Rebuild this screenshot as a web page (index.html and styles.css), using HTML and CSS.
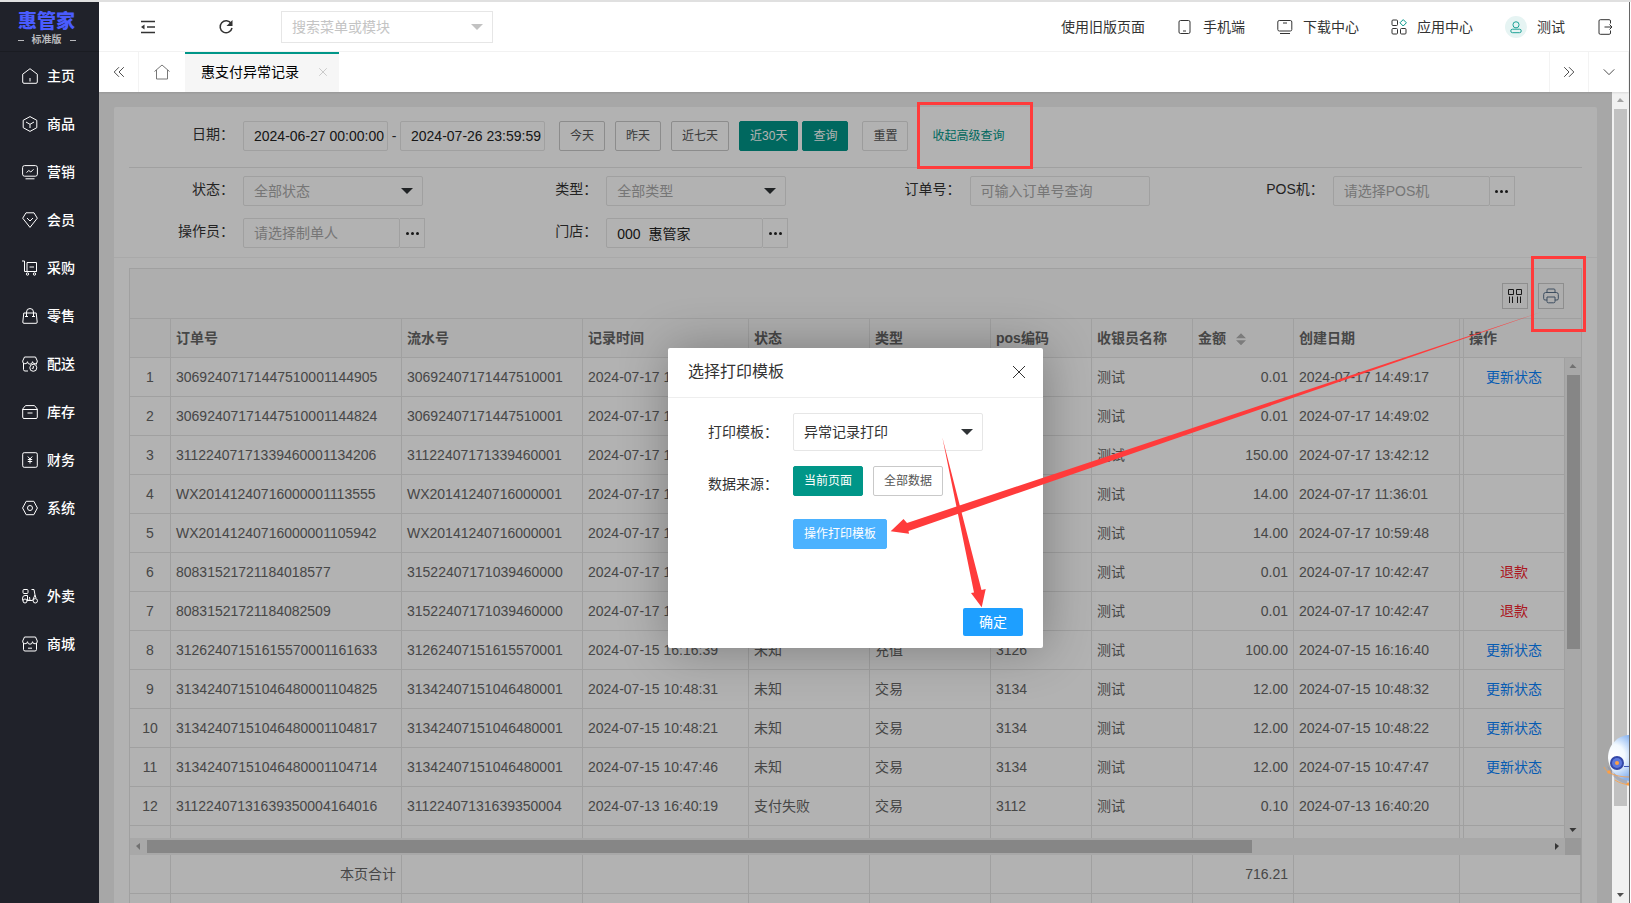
FILE: index.html
```
<!DOCTYPE html>
<html lang="zh-CN">
    <head>
        <meta charset="UTF-8"/>
        <title>惠支付异常记录</title>
        <link rel="stylesheet" href="styles.css">
    </head>
    <body>
        <aside class="side">
          <div class="logo"><strong>惠管家</strong><span>标准版</span></div>
          <nav>
            <a href="#"><svg viewBox="0 0 16 16"><path d="M.7 6.2 8 .7l7.300 5.500V14a1.300 1.300 0 0 1-1.300 1.300H2A1.300 1.300 0 0 1 .7 14zM8 10v3.500"/></svg>主页</a>
            <a href="#"><svg viewBox="0 0 16 16"><path d="M8 .6 14.800 4.300v7.400L8 15.400 1.200 11.700V4.300zM4 6l4 2.300L12 6M8 8.300V12"/></svg>商品</a>
            <a href="#"><svg viewBox="0 0 16 16"><rect x=".6" y="1.600" width="14.800" height="10.600" rx="2"/><path d="m4.500 8.500 2.300-2 2 1.500 2.700-2.700M3.500 14.800h9"/></svg>营销</a>
            <a href="#"><svg viewBox="0 0 16 16"><path d="M4 .8h8l3.300 5.400L8 15.400.7 6.200zM5 6l3 3 3-3"/></svg>会员</a>
            <a href="#"><svg viewBox="0 0 16 16"><path d="M0 1h2.500v10.500h12M5 2.500h9.500v9H5zM7.500 7h4.500"/><circle cx="5.500" cy="14" r="1.200"/><circle cx="12.500" cy="14" r="1.200"/></svg>采购</a>
            <a href="#"><svg viewBox="0 0 16 16"><path d="M1.800 5h12.400l1 9a1.200 1.200 0 0 1-1.200 1.300H2A1.200 1.200 0 0 1 .8 14zM4.500 9V4a3.500 3.500 0 0 1 7 0v5M3 8.500h3M10 8.500h3"/></svg>零售</a>
            <a href="#"><svg viewBox="0 0 16 16"><path d="M6 15H3a1.500 1.500 0 0 1-1.500-1.500V7M14.500 7v1.500M2.500 1h11l1.800 4a2.400 2.400 0 0 1-4.800.7 2.500 2.500 0 0 1-5 0A2.400 2.400 0 0 1 .7 5z"/><circle cx="11.300" cy="11.800" r="3.500"/><path d="M11.300 10v2.300h-1.500"/></svg>配送</a>
            <a href="#"><svg viewBox="0 0 16 16"><path d="M3.500 1.600h9L15.300 5v8.200a1.300 1.300 0 0 1-1.300 1.300H2a1.300 1.300 0 0 1-1.300-1.300V5zM.7 5.500h14.600M5.500 9h5"/></svg>库存</a>
            <a href="#"><svg viewBox="0 0 16 16"><rect x=".7" y=".7" width="14.600" height="14.600" rx="1.500"/><path d="M5.800 4.500 8 7l2.200-2.500M8 7v4.500M5.800 7.500h4.400M5.800 9.500h4.400"/></svg>财务</a>
            <a href="#"><svg viewBox="0 0 16 16"><path d="M4.200 1.300h7.600L15.400 8l-3.600 6.700H4.200L.6 8z"/><circle cx="8" cy="8" r="2.500"/></svg>系统</a>
            <a href="#" class="gap"><svg viewBox="0 0 16 16"><rect x="1" y="1.500" width="5" height="4" rx="1"/><path d="M.6 12.500V10A2.500 2.500 0 0 1 3 7.500h2.500V12L8 12.500h2.500L13 7l-1-5.500H9.500M13 7l1 3M5 12.500h3L7.500 9"/><circle cx="3" cy="13" r="2"/><circle cx="13.300" cy="12.800" r="2.200"/></svg>外卖</a>
            <a href="#"><svg viewBox="0 0 16 16"><path d="M1.500 7v6.500A1.500 1.500 0 0 0 3 15h10a1.500 1.500 0 0 0 1.500-1.500V7M2.500 1h11l1.800 4a2.400 2.400 0 0 1-4.800.7 2.500 2.500 0 0 1-5 0A2.400 2.400 0 0 1 .7 5zM6 12.200h4"/></svg>商城</a>
          </nav>
        </aside>
        <div class="page">
          <header class="top">
            <button class="icon-btn" aria-label="收起菜单"><svg viewBox="0 0 16 16"><path d="M1 2.500h14M7 8h8M1 13.500h14"/><path d="M4.500 5.500v5L1 8z" fill="currentColor" stroke="none"/></svg></button>
            <button class="icon-btn refresh" aria-label="刷新"><svg viewBox="0 0 16 16"><path d="M13.200 4.500A6 6 0 1 0 14 9"/><path d="M14.500 1v6h-6z" fill="currentColor" stroke="none"/></svg></button>
            <label class="search"><input type="text" placeholder="搜索菜单或模块" aria-label="搜索菜单或模块"><i class="caret"></i></label>
            <nav class="links">
              <a href="#">使用旧版页面</a>
              <a href="#"><svg viewBox="0 0 16 16"><rect x="2" y="1.500" width="11" height="13" rx="1.500"/><path d="M6 12h3"/></svg>手机端</a>
              <a href="#"><svg viewBox="0 0 16 16"><rect x=".8" y="1.500" width="14" height="10.500" rx="1.500"/><path d="M6 4h4M3 14.500h10"/></svg>下载中心</a>
              <a href="#"><svg viewBox="0 0 16 16"><rect x="1" y="1" width="5.500" height="5.500" rx="1"/><rect x="1" y="9.500" width="5.500" height="5.500" rx="1"/><rect x="9.500" y="9.500" width="5.500" height="5.500" rx="1"/><path class="teal" d="m12.200.6 3.200 3.200L12.200 7 9 3.800z"/></svg>应用中心</a>
              <a href="#" class="user"><span class="avatar"><svg viewBox="0 0 16 16"><circle cx="8" cy="5.500" r="3.500"/><rect x="2" y="10.500" width="12" height="4" rx="2"/></svg></span>测试</a>
              <a href="#" aria-label="退出"><svg viewBox="0 0 16 16"><path d="M13.500 4.500V2A1.300 1.300 0 0 0 12.200.7H3.300A1.300 1.300 0 0 0 2 2v12a1.300 1.300 0 0 0 1.300 1.300h8.900a1.300 1.300 0 0 0 1.300-1.300v-2.500M7.500 8h7M12.500 5.500 15 8l-2.500 2.500"/></svg></a>
            </nav>
          </header>
          <div class="tabs">
            <button class="tab-btn" aria-label="向左"><svg viewBox="0 0 16 16"><path d="M8 2.500 2.500 8 8 13.500M13.500 2.500 8 8l5.500 5.500"/></svg></button>
            <a href="#" class="tab-home" aria-label="主页"><svg viewBox="0 0 16 16"><path d="M.5 7.500 8 1l7.500 6.500M2.500 6v9h11V6"/></svg></a>
            <a href="#" class="tab">惠支付异常记录<svg viewBox="0 0 16 16"><path d="m3 3 10 10M13 3 3 13"/></svg></a>
            <button class="tab-btn right" aria-label="向右"><svg viewBox="0 0 16 16"><path d="m2.500 2.500 5.500 5.500-5.500 5.500M8 2.500 13.500 8 8 13.500"/></svg></button>
            <button class="tab-btn" aria-label="更多"><svg viewBox="0 0 16 16"><path d="m2 5 6 6 6-6"/></svg></button>
          </div>
          <div class="frame">
            <div class="body">
              <main class="card">
                <form class="filters" action="javascript:;">
                  <div class="date-row">
                    <label for="from">日期：</label>
                    <input type="text" id="from" value="2024-06-27 00:00:00">
                    <span class="dash">-</span>
                    <input type="text" aria-label="结束日期" value="2024-07-26 23:59:59">
                    <div class="quick">
                      <button class="btn">今天</button>
                      <button class="btn">昨天</button>
                      <button class="btn">近七天</button>
                      <div class="pair"><button class="btn primary">近30天</button><button class="btn primary">查询</button></div>
                    </div>
                    <button class="btn light" type="reset">重置</button>
                    <a href="#" class="advanced">收起高级查询</a>
                  </div>
                  <div class="grid">
                    <div class="field"><label for="status">状态：</label><div class="select"><select id="status"><option>全部状态</option></select><i class="caret"></i></div></div>
                    <div class="field"><label for="type">类型：</label><div class="select"><select id="type"><option>全部类型</option></select><i class="caret"></i></div></div>
                    <div class="field"><label for="order">订单号：</label><input type="text" id="order" placeholder="可输入订单号查询"></div>
                    <div class="field"><label for="pos">POS机：</label><div class="picker"><input type="text" id="pos" placeholder="请选择POS机"><button aria-label="选择POS机"><i></i><i></i><i></i></button></div></div>
                    <div class="field"><label for="maker">操作员：</label><div class="picker"><input type="text" id="maker" placeholder="请选择制单人"><button aria-label="选择制单人"><i></i><i></i><i></i></button></div></div>
                    <div class="field"><label for="shop">门店：</label><div class="picker"><input type="text" id="shop" value="000  惠管家"><button aria-label="选择门店"><i></i><i></i><i></i></button></div></div>
                  </div>
                </form>
                <section class="list">
                  <div class="tools">
                    <button aria-label="筛选列"><svg viewBox="0 0 16 16"><path d="M1.500 1.500h5v5h-5zM9.500 1.500h5v5h-5zM2.500 8.500V15M5.500 8.500V15M10.500 8.500V15M13.500 8.500V15"/></svg></button>
                    <button class="print" aria-label="打印"><svg viewBox="0 0 16 16"><path d="M4 4.500V2a1 1 0 0 1 1-1h6a1 1 0 0 1 1 1v2.500M4 12H2a1.300 1.300 0 0 1-1.300-1.300V6.500A2 2 0 0 1 2.700 4.500h10.600a2 2 0 0 1 2 2v4.200A1.300 1.300 0 0 1 14 12h-2M4 9h8v4.500a1.300 1.300 0 0 1-1.300 1.300H5.300A1.300 1.300 0 0 1 4 13.500z"/></svg></button>
                  </div>
                  <table class="head">
                    <colgroup><col class="c-no"><col class="c-order"><col class="c-flow"><col class="c-time"><col class="c-kind"><col class="c-kind"><col class="c-short"><col class="c-short"><col class="c-short"><col class="c-time"><col><col class="c-op-head"></colgroup>
                    <thead><tr><th></th><th>订单号</th><th>流水号</th><th>记录时间</th><th>状态</th><th>类型</th><th>pos编码</th><th>收银员名称</th><th>金额<span class="sort"></span></th><th>创建日期</th><th class="sliver"></th><th>操作</th></tr></thead>
                  </table>
                  <div class="rows">
                    <table>
                      <colgroup><col class="c-no"><col class="c-order"><col class="c-flow"><col class="c-time"><col class="c-kind"><col class="c-kind"><col class="c-short"><col class="c-short"><col class="c-short"><col class="c-time"><col><col class="c-short"></colgroup>
                      <tbody>
                        <tr><td>1</td><td>30692407171447510001144905</td><td>30692407171447510001</td><td>2024-07-17 14:49:16</td><td>未知</td><td>交易</td><td>3069</td><td>测试</td><td>0.01</td><td>2024-07-17 14:49:17</td><td></td><td><a href="#">更新状态</a></td></tr>
                        <tr><td>2</td><td>30692407171447510001144824</td><td>30692407171447510001</td><td>2024-07-17 14:49:01</td><td>未知</td><td>交易</td><td>3069</td><td>测试</td><td>0.01</td><td>2024-07-17 14:49:02</td><td></td><td></td></tr>
                        <tr><td>3</td><td>31122407171339460001134206</td><td>31122407171339460001</td><td>2024-07-17 13:42:11</td><td>未知</td><td>交易</td><td>3112</td><td>测试</td><td>150.00</td><td>2024-07-17 13:42:12</td><td></td><td></td></tr>
                        <tr><td>4</td><td>WX20141240716000001113555</td><td>WX20141240716000001</td><td>2024-07-17 11:36:00</td><td>未知</td><td>交易</td><td>2014</td><td>测试</td><td>14.00</td><td>2024-07-17 11:36:01</td><td></td><td></td></tr>
                        <tr><td>5</td><td>WX20141240716000001105942</td><td>WX20141240716000001</td><td>2024-07-17 10:59:47</td><td>未知</td><td>交易</td><td>2014</td><td>测试</td><td>14.00</td><td>2024-07-17 10:59:48</td><td></td><td></td></tr>
                        <tr><td>6</td><td>80831521721184018577</td><td>31522407171039460000</td><td>2024-07-17 10:42:46</td><td>未知</td><td>交易</td><td>3152</td><td>测试</td><td>0.01</td><td>2024-07-17 10:42:47</td><td></td><td><a href="#" class="refund">退款</a></td></tr>
                        <tr><td>7</td><td>80831521721184082509</td><td>31522407171039460000</td><td>2024-07-17 10:42:46</td><td>未知</td><td>交易</td><td>3152</td><td>测试</td><td>0.01</td><td>2024-07-17 10:42:47</td><td></td><td><a href="#" class="refund">退款</a></td></tr>
                        <tr><td>8</td><td>31262407151615570001161633</td><td>31262407151615570001</td><td>2024-07-15 16:16:39</td><td>未知</td><td>充值</td><td>3126</td><td>测试</td><td>100.00</td><td>2024-07-15 16:16:40</td><td></td><td><a href="#">更新状态</a></td></tr>
                        <tr><td>9</td><td>31342407151046480001104825</td><td>31342407151046480001</td><td>2024-07-15 10:48:31</td><td>未知</td><td>交易</td><td>3134</td><td>测试</td><td>12.00</td><td>2024-07-15 10:48:32</td><td></td><td><a href="#">更新状态</a></td></tr>
                        <tr><td>10</td><td>31342407151046480001104817</td><td>31342407151046480001</td><td>2024-07-15 10:48:21</td><td>未知</td><td>交易</td><td>3134</td><td>测试</td><td>12.00</td><td>2024-07-15 10:48:22</td><td></td><td><a href="#">更新状态</a></td></tr>
                        <tr><td>11</td><td>31342407151046480001104714</td><td>31342407151046480001</td><td>2024-07-15 10:47:46</td><td>未知</td><td>交易</td><td>3134</td><td>测试</td><td>12.00</td><td>2024-07-15 10:47:47</td><td></td><td><a href="#">更新状态</a></td></tr>
                        <tr><td>12</td><td>31122407131639350004164016</td><td>31122407131639350004</td><td>2024-07-13 16:40:19</td><td>支付失败</td><td>交易</td><td>3112</td><td>测试</td><td>0.10</td><td>2024-07-13 16:40:20</td><td></td><td></td></tr>
                        <tr><td></td><td></td><td></td><td></td><td></td><td></td><td></td><td></td><td></td><td></td><td></td><td></td></tr>
                      </tbody>
                    </table>
                    <div class="bar v"><i class="arrow up"></i><b></b><i class="arrow down"></i></div>
                  </div>
                  <div class="hbar"><div class="bar h"><i class="arrow left"></i><b></b><i class="arrow next"></i></div><span class="corner"></span></div>
                  <table class="total">
                    <colgroup><col class="c-no"><col class="c-order"><col class="c-flow"><col class="c-time"><col class="c-kind"><col class="c-kind"><col class="c-short"><col class="c-short"><col class="c-short"><col class="c-time"><col></colgroup>
                    <tbody>
                      <tr><td></td><td>本页合计</td><td></td><td></td><td></td><td></td><td></td><td></td><td>716.21</td><td></td><td></td></tr>
                      <tr><td></td><td></td><td></td><td></td><td></td><td></td><td></td><td></td><td></td><td></td><td></td></tr>
                    </tbody>
                  </table>
                </section>
              </main>
              <div class="shade">
                <div class="dialog" role="dialog" aria-labelledby="dialog-title">
                  <div class="dialog-head"><h2 id="dialog-title">选择打印模板</h2><button aria-label="关闭"><svg viewBox="0 0 16 16"><path d="m2 2 12 12M14 2 2 14"/></svg></button></div>
                  <form class="dialog-form" action="javascript:;">
                    <label for="template">打印模板：</label>
                    <div class="select"><select id="template"><option>异常记录打印</option></select><i class="caret"></i></div>
                    <span class="source-label">数据来源：</span>
                    <div class="source"><button class="btn primary">当前页面</button><button class="btn">全部数据</button></div>
                    <button class="btn blue">操作打印模板</button>
                  </form>
                  <div class="dialog-foot"><button>确定</button></div>
                </div>
              </div>
            </div>
            <div class="bar v page-bar"><i class="arrow up"></i><b></b><i class="arrow down"></i></div>
          </div>
        </div>
        <div class="edge"></div>
        <!-- help robot peeking from the right edge -->
        <svg class="robot" viewBox="0 0 26 60">
          <defs>
            <radialGradient id="shell" gradientUnits="userSpaceOnUse" cx="10" cy="26" r="26"><stop offset="0" stop-color="#fff"/><stop offset=".45" stop-color="#f2f9ff"/><stop offset="1" stop-color="#86b2f0"/></radialGradient>
          </defs>
          <path d="M4 36c4 12 14 17 22 19v-6z" fill="#7c88a8" opacity=".35"/>
          <path d="M26 5C13 6 5 16 5 28c1 13 10 21 21 23z" fill="url(#shell)"/>
          <circle cx="14" cy="33" r="7" fill="#3448a8"/><circle cx="14" cy="33" r="5" fill="#5c78dc"/><circle cx="14" cy="33" r="2" fill="#ff9f43"/>
          <path d="M21 36.500h5" stroke="#3c55b8"/>
          <path d="M1 37c2 4 4 5 6 6 6 3 12 4 19 4M12 50c4 3 9 4 14 5" fill="none" stroke="#ff9f43" stroke-width=".8"/>
          <circle cx="6" cy="42" r="1.800" fill="#ff9f43"/><circle cx="25" cy="54" r="1.500" fill="#ff9f43"/>
        </svg>
        <!-- guide marks: boxes and arrows over the page -->
        <svg class="marks" width="1631" height="903" viewBox="0 0 1631 903">
          <rect x="918.500" y="103.500" width="113" height="64"/>
          <rect x="1532.500" y="257.500" width="52" height="73"/>
          <polygon points="1541,312 907,523 903.500,519 890.700,531.300 909,533.700 908.500,531"/>
          <polygon points="942.300,437.300 974,592.500 971,593 981.700,607.300 985.700,589 981.500,590"/>
        </svg>
    </body>
</html>
```

FILE: styles.css
```
* {
  box-sizing: border-box;
}

body {
  display: flex;
  position: relative;
  margin: 0;
  height: 100vh;
  overflow: hidden;
  border-top: 2px solid #e0e0e0;
  background: #fff;
  color: #333;
  font: 14px/20px "Liberation Sans", "Noto Sans CJK SC", sans-serif;
}

a {
  color: inherit;
  text-decoration: none;
}

button, input, select {
  margin: 0;
  padding: 0;
  border: 0;
  border-radius: 0;
  background: none;
  color: inherit;
  font: inherit;
}

input, select {
  outline: 0;
  appearance: none;
}

svg {
  flex: none;
  width: 16px;
  height: 16px;
  fill: none;
  stroke: currentColor;
}

/* side menu */
.side {
  flex: none;
  width: 99px;
  background: #20222a;
  color: #fff;
}

.logo {
  display: flex;
  flex-direction: column;
  align-items: center;
  height: 50px;
  padding: 10px 6px 0 0;
  border-bottom: 1px solid #1a1c22;
}
.logo strong {
  color: #4a5cff;
  font-size: 19px;
  font-weight: 900;
  line-height: 20px;
}
.logo span {
  display: flex;
  align-items: center;
  gap: 8px;
  color: #b8b9bc;
  font-size: 10px;
  font-weight: bold;
  line-height: 16px;
}
.logo span::before, .logo span::after {
  content: '';
  width: 6px;
  height: 1px;
  background: #b8b9bc;
}

.side a {
  display: flex;
  align-items: center;
  gap: 9px;
  height: 48px;
  padding-left: 22px;
  font-weight: 500;
}
.side .gap {
  margin-top: 40px;
}

.page {
  display: flex;
  flex: 1;
  flex-direction: column;
  min-width: 0;
}

.edge {
  width: 2px;
  border-left: 1px solid #666;
}

/* header */
.top {
  display: flex;
  flex: none;
  align-items: center;
  height: 50px;
  border-bottom: 1px solid #f3f3f3;
  padding: 0 16px 0 41px;
}
.icon-btn {
  display: flex;
  stroke-width: 1.5;
}
.refresh {
  margin: 0 47px 0 62px;
}

.search {
  display: flex;
  align-items: center;
  width: 212px;
  height: 32px;
  padding: 0 9px 0 10px;
  border: 1px solid #e6e6e6;
}
.search input {
  flex: 1;
  min-width: 0;
}
::placeholder {
  color: #aaa;
  opacity: 1;
}
.search ::placeholder {
  color: #c4c4c4;
}

.caret {
  border: 6px solid transparent;
  border-top-color: #2f3336;
  border-bottom: 0;
}
.search .caret {
  border-top-color: #c2c2c2;
}

.links {
  display: flex;
  gap: 32px;
  margin-left: auto;
}
.links a {
  display: flex;
  align-items: center;
  gap: 10px;
}
.teal {
  stroke: #009688;
}
.avatar {
  display: flex;
  align-items: center;
  justify-content: center;
  width: 22px;
  height: 22px;
  border-radius: 50%;
  background: #e6f4f3;
  color: #009688;
}
.avatar svg {
  width: 14px;
  height: 14px;
}

/* opened pages */
.tabs {
  display: flex;
  z-index: 1;
  flex: none;
  height: 40px;
  box-shadow: 0 1px 2px rgba(0, 0, 0, .1);
}
.tab-btn {
  display: flex;
  align-items: center;
  justify-content: center;
  width: 40px;
  border-right: 1px solid #f3f3f3;
}
.tab-btn svg {
  width: 14px;
  height: 14px;
}
.tab-btn.right {
  margin-left: auto;
  border-left: 1px solid #f3f3f3;
}
.tab-home {
  display: flex;
  align-items: center;
  padding: 0 15px;
  color: #777;
}
.tab {
  display: flex;
  align-items: center;
  gap: 18px;
  padding: 0 10px 2px 16px;
  border-top: 2px solid #009688;
  background: #f6f6f6;
  color: #000;
}
.tab svg {
  width: 12px;
  height: 12px;
  color: #bbb;
}

/* page body */
.frame {
  display: flex;
  flex: 1;
  min-height: 0;
}
.body {
  position: relative;
  flex: 1;
  min-width: 0;
  overflow: hidden;
  padding: 15px 15px 0;
  background: #f0f0f0;
}
.card {
  border-radius: 2px;
  background: #fff;
}

.filters {
  padding: 0 15px 9px;
  border-bottom: 1px solid #f2f2f2;
}
.filters label {
  flex: none;
  width: 105px;
  margin-right: 9px;
  text-align: right;
}
.filters input, .filters select {
  width: 180px;
  height: 30px;
  padding: 0 10px;
  border: 1px solid #e6e6e6;
  border-radius: 2px;
  color: #222;
}
.filters select {
  color: #aaa;
}
.date-row {
  display: flex;
  align-items: center;
  height: 61px;
  padding-bottom: 3px;
  border-bottom: 1px solid #e6e6e6;
}
.date-row label {
  padding-bottom: 4px;
}
.filters .date-row input {
  width: 145px;
  padding-right: 0;
}
.dash {
  width: 12px;
  text-align: center;
}
.quick {
  display: flex;
  gap: 10px;
  margin: 0 14px;
}
.pair {
  display: flex;
  gap: 4px;
}

.btn {
  height: 30px;
  padding: 0 10px;
  border: 1px solid #c9c9c9;
  border-radius: 2px;
  background: #fff;
  color: #555;
  font-size: 12px;
  white-space: nowrap;
}
.btn.light {
  border-color: #e0e0e0;
}
.btn.primary {
  border-color: #009688;
  background: #009688;
  color: #fff;
}
.btn.blue {
  border-color: #4bb2ff;
  background: #4bb2ff;
  color: #fff;
}
.advanced {
  margin-left: 24px;
  color: #009688;
  font-size: 12px;
}

.grid {
  display: grid;
  grid-template-columns: repeat(4, 1fr);
  row-gap: 12px;
  padding-top: 8px;
}
.field {
  display: flex;
}
.field label {
  padding-top: 3px;
}
.select {
  display: grid;
  align-items: center;
}
.select > * {
  grid-area: 1 / 1;
}
.select .caret {
  justify-self: end;
  margin-right: 10px;
  pointer-events: none;
}
.picker {
  display: flex;
}
.picker input {
  width: 157px;
  white-space: pre;
}
.picker button {
  display: flex;
  align-items: center;
  justify-content: center;
  gap: 2px;
  width: 25px;
  border: 1px solid #e6e6e6;
  border-left: 0;
}
.picker i {
  width: 3px;
  height: 3px;
  border-radius: 50%;
  background: #222;
}

/* records */
.list {
  margin: 10px 15px 0;
  border: 1px solid #e6e6e6;
  color: #666;
}
.tools {
  display: flex;
  justify-content: flex-end;
  gap: 10px;
  height: 49px;
  padding: 14px 17px 0;
  background: #fafafa;
}
.tools button {
  display: flex;
  align-items: center;
  justify-content: center;
  width: 26px;
  height: 26px;
  border: 1px solid #ccc;
  color: #222;
}
.tools .print {
  color: #58708a;
}

table {
  width: 100%;
  table-layout: fixed;
  border-collapse: separate;
  border-spacing: 0;
}
.c-no { width: 41px; }
.c-order { width: 231px; }
.c-flow { width: 181px; }
.c-time { width: 166px; }
.c-kind { width: 121px; }
.c-short { width: 101px; }
.c-op-head { width: 117px; }
th, td {
  height: 39px;
  padding: 0 5px;
  overflow: hidden;
  border-right: 1px solid #e6e6e6;
  border-bottom: 1px solid #e6e6e6;
  text-align: left;
  white-space: nowrap;
}
th {
  border-top: 1px solid #e6e6e6;
  height: 40px;
  background: #fafafa;
  font-weight: bold;
}
.head th:last-child {
  border-right: 0;
}
td:nth-child(11), .sliver {
  padding: 0;
}
td:first-child, .rows td:last-child {
  text-align: center;
}
td:nth-child(9), .total td:nth-child(2) {
  text-align: right;
}
.rows a {
  color: #0a84ff;
}
.rows .refund {
  color: #f5222d;
}
.sort {
  display: inline-block;
  width: 10px;
  height: 12px;
  margin-left: 10px;
  vertical-align: middle;
  background: #b2b2b2;
  clip-path: polygon(50% 0, 100% 42%, 0 42%, 0 58%, 100% 58%, 50% 100%, 0 58%, 0 42%);
}
.rows {
  display: flex;
  height: 480px;
  overflow: hidden;
}
.rows table {
  flex: 1;
  min-width: 0;
}

/* scroll bars */
.bar {
  display: flex;
  flex: none;
  align-items: center;
  background: #f1f1f1;
}
.bar.v {
  flex-direction: column;
  width: 17px;
}
.rows .bar.v {
  width: 16px;
}
.bar.h {
  flex: 1;
  height: 17px;
}
.bar b {
  background: #c1c1c1;
}
.bar.v b {
  width: 13px;
}
.bar.h b {
  width: 77%;
  height: 13px;
}
.arrow {
  flex: none;
  width: 17px;
  height: 17px;
  background: #505050;
}
.arrow.up { clip-path: polygon(5px 10px, 12px 10px, 8px 6px); background: #a3a3a3; }
.arrow.down { clip-path: polygon(5px 7px, 12px 7px, 8px 11px); margin-top: auto; }
.arrow.left { clip-path: polygon(10px 5px, 10px 12px, 6px 8px); background: #a3a3a3; }
.arrow.next { clip-path: polygon(7px 5px, 7px 12px, 11px 8px); margin-left: auto; }
.rows .bar b {
  height: 57%;
}
.page-bar b {
  height: 86%;
}
.hbar {
  display: flex;
}
.corner {
  width: 16px;
  background: #dcdcdc;
}

/* print dialog */
.shade {
  display: flex;
  position: absolute;
  inset: 0;
  align-items: center;
  justify-content: center;
  background: rgba(0, 0, 0, .3);
}
.dialog {
  display: flex;
  flex-direction: column;
  width: 375px;
  min-height: 300px;
  border-radius: 2px;
  background: #fff;
  box-shadow: 1px 1px 50px rgba(0, 0, 0, .3);
}
.dialog-head {
  display: flex;
  align-items: center;
  justify-content: space-between;
  height: 50px;
  padding: 0 16px 0 20px;
  border-bottom: 1px solid #eee;
}
.dialog-head h2 {
  margin: 0;
  font-size: 16px;
  font-weight: normal;
}
.dialog-head button {
  display: flex;
}
.dialog-form {
  display: grid;
  grid-template-columns: 70px auto;
  justify-content: start;
  align-items: center;
  column-gap: 15px;
  row-gap: 15px;
  padding: 15px 40px 0;
}
.dialog-form select {
  width: 190px;
  height: 38px;
  padding: 0 10px;
  border: 1px solid #e6e6e6;
  border-radius: 2px;
}
.source-label {
  padding-top: 6px;
}
.source {
  display: flex;
  gap: 10px;
}
.dialog-form .blue {
  grid-column: 2;
  justify-self: start;
  margin-top: 8px;
}
.dialog-foot {
  display: flex;
  justify-content: flex-end;
  margin-top: auto;
  padding: 0 20px 12px;
}
.dialog-foot button {
  width: 60px;
  height: 28px;
  border-radius: 2px;
  background: #1e9fff;
  color: #fff;
}

.robot {
  position: absolute;
  right: 2px;
  top: 728px;
  width: 26px;
  height: 60px;
  stroke: none;
}
.marks {
  position: absolute;
  top: -2px;
  left: 0;
  width: 1631px;
  height: 903px;
  pointer-events: none;
  stroke: none;
}
.marks rect {
  stroke: #ff3b3b;
  stroke-width: 3;
}
.marks polygon {
  fill: #ff3b3b;
}
```
